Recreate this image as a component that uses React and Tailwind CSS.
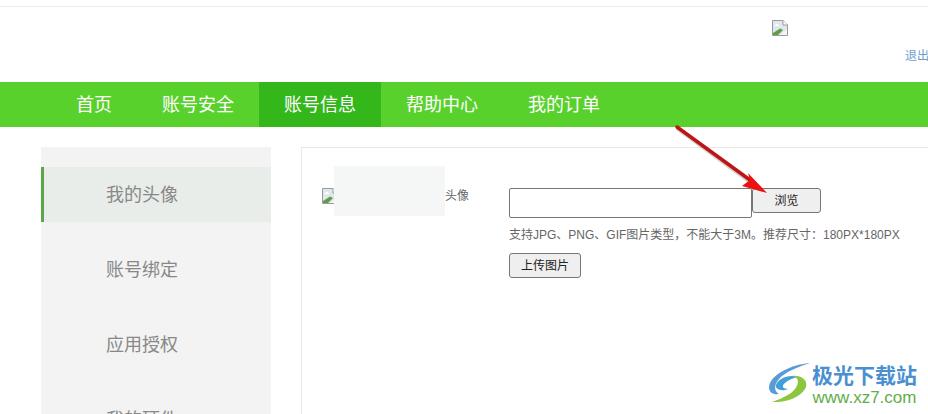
// Account page: avatar upload, with annotation arrow and watermark on top
const FONT = "font-['Liberation_Sans','Noto_Sans_CJK_SC',sans-serif]";

function BrokenImage() {
  return (
    <svg width="16" height="16" viewBox="0 0 16 16" className="shrink-0">
      <path d="M0.5 0.5H11L15.5 5V15.5H0.5Z" fill="#dfe7ee" stroke="#9a9a9a" />
      <path d="M11 0.5V5H15.5" fill="#fff" stroke="#9a9a9a" />
      <path d="M2 6L5 3.5L8 6Z" fill="#fff" />
      <path d="M1 15V13L8 8.5L11 10L6 15Z" fill="#5f9e45" />
      <path d="M8 15L15 9V15Z" fill="#f5f5f5" />
    </svg>
  );
}

const navItems = ["首页", "账号安全", "账号信息", "帮助中心", "我的订单"];

function Nav() {
  return (
    <nav className="mt-[75px] flex h-[45px] bg-[#59d12c] pl-[51px] text-lg text-white">
      {navItems.map((item) => (
        <a
          key={item}
          className={`flex items-center px-[25px] ${item === "账号信息" ? "bg-[#34b71b]" : ""}`}
        >
          {item}
        </a>
      ))}
    </nav>
  );
}

function Sidebar() {
  const items = ["账号绑定", "应用授权", "我的硬件"];
  return (
    <aside className="h-[300px] w-[230px] shrink-0 bg-[#f3f3f3] pt-5 text-lg text-[#888]">
      <div className="flex h-[55px] items-center border-l-[3px] border-[#5aa845] bg-[#e9edea] pl-[62px]">
        我的头像
      </div>
      {items.map((item) => (
        <div key={item} className="mt-5 flex h-[55px] items-center pl-[65px]">
          {item}
        </div>
      ))}
    </aside>
  );
}

function UploadForm() {
  return (
    <section className="ml-[30px] flex h-[300px] grow border border-[#e8e8e8] pl-5 pt-10">
      <div className="relative flex h-4 w-[187px] shrink-0 items-start text-xs text-[#666]">
        <BrokenImage />
        <span className="absolute left-[123px] top-0 leading-4">头像</span>
      </div>
      <div className="min-w-0">
        <div className="flex items-start">
          <div className="h-[30px] w-[243px] rounded-[2px] border border-[#767676] bg-white" />
          <button className="h-[25px] w-[69px] rounded-[3px] border border-[#767676] bg-[#efefef] text-xs text-[#222]">
            浏览
          </button>
        </div>
        <p className="mt-[9px] whitespace-nowrap text-xs leading-4 text-[#666]">
          支持JPG、PNG、GIF图片类型，不能大于3M。推荐尺寸：180PX*180PX
        </p>
        <button className="mt-[10px] h-[25px] w-[72px] rounded-[3px] border border-[#767676] bg-[#efefef] text-xs text-[#222]">
          上传图片
        </button>
      </div>
    </section>
  );
}

function Arrow() {
  return (
    <svg width="110" height="80" viewBox="0 0 110 80" className="absolute left-[670px] top-[122px]">
      <path d="M8 7L80 60" stroke="#000" strokeOpacity="0.18" strokeWidth="4" strokeLinecap="round" />
      <path d="M7 5L80 58" stroke="#bd1515" strokeWidth="3.5" strokeLinecap="round" />
      <path d="M97 71L72 64L80 58L78 51Z" fill="#ee1111" />
    </svg>
  );
}

function Watermark() {
  return (
    <div className="absolute left-[768px] top-[362px] flex items-start">
      <svg width="44" height="42" viewBox="0 0 44 42" className="shrink-0">
        <path d="M42 1C28 2 8 9 2 21C-1 28 3 33 11 32C5 29 6 21 14 14C22 8 32 4 42 1Z" fill="#5b9bd5" />
        <path d="M30 15C20 12 10 17 8 23C7 27 13 30 20 27C15 27 13 24 17 21C20 18 25 16 30 15Z" fill="#3f9fd8" />
        <path d="M24 14C33 15 31 25 23 31C17 35 10 38 4 40C18 41 34 35 38 25C40 18 33 13 24 14Z" fill="#8cc63f" />
      </svg>
      <div className="flex flex-col items-center">
        <div className="mt-[2px] text-[21px] font-bold leading-[24px] text-[#4a90d0]">极光下载站</div>
        <div className="mt-[1px] text-[17px] leading-[18px] text-[#62ad4a]">www.xz7.com</div>
      </div>
    </div>
  );
}

export default function App() {
  return (
    <div className={`relative h-[414px] w-[928px] overflow-hidden bg-white ${FONT}`}>
      <div className="mt-[6px] h-px bg-[#ebebeb]" />
      <header className="absolute left-[772px] top-[20px]">
        <BrokenImage />
      </header>
      <a className="absolute left-[905px] top-[48px] whitespace-nowrap text-xs leading-4 text-[#6f9ecb]">退出</a>
      <Nav />
      <main className="ml-[41px] mt-5 flex w-[1000px]">
        <Sidebar />
        <UploadForm />
      </main>
      <div className="absolute left-[334px] top-[166px] h-[50px] w-[111px] bg-[#f5f7f7]" />
      <Arrow />
      <Watermark />
    </div>
  );
}
